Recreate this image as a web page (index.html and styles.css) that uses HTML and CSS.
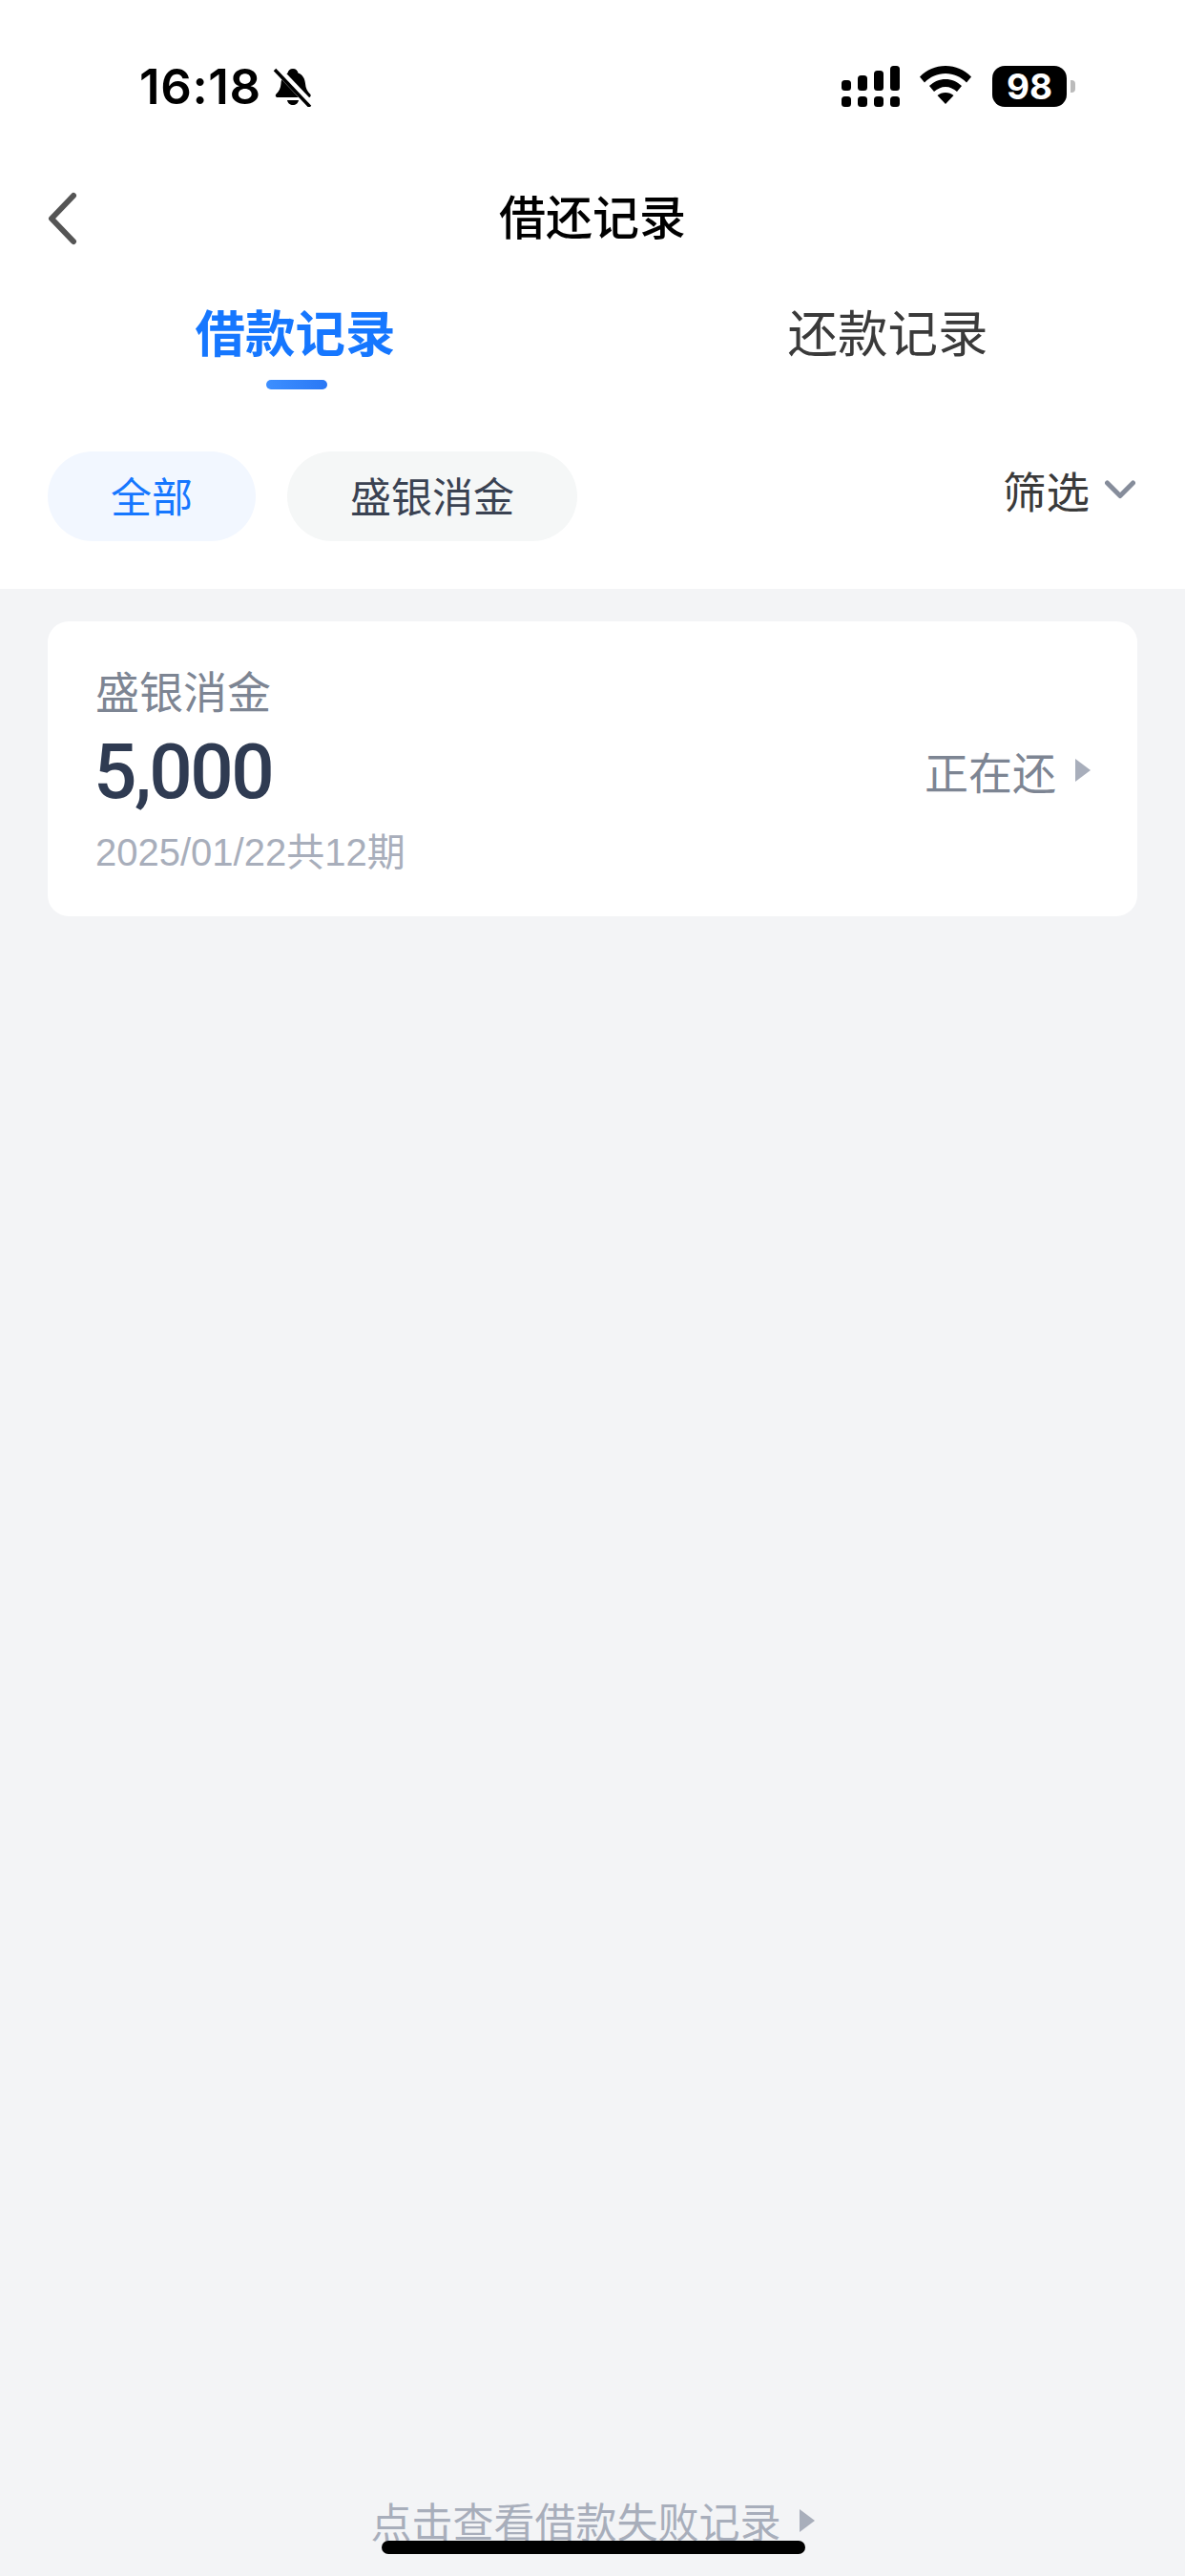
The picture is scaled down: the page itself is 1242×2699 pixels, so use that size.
FILE: index.html
```html
<!DOCTYPE html>
<html lang="zh-CN">
<head>
<meta charset="UTF-8" />
<meta name="viewport" content="width=device-width, initial-scale=1" />
<title>借还记录</title>
<link rel="stylesheet" href="styles.css">
</head>
<body>

<div class="app">
  <header class="top">
    <div class="status">
      <div class="status-left">
        <span class="time">16:18</span>
        <svg class="bell" width="42" height="42" viewBox="0 0 42 42">
          <path d="M21 2c3 0 5 2 5.500 4.500 5 2 7 6 7.500 11 .4 5 2 8 5 11 1.500 1.500 .5 3.500-1.500 3.500H5c-2 0-3-2-1.500-3.500 3-3 4.600-6 5-11 .3-4 1.500-8 7-11C16 4 18 2 21 2z"/>
          <path d="M15 35h12c-.5 3-3 5-6 5s-5.500-2-6-5z"/>
          <path d="M3 1l37 39" stroke="#fff" stroke-width="8"/>
          <path d="M2 3l37 39" stroke="#000" stroke-width="3.500"/>
        </svg>
      </div>
      <div class="status-right">
        <svg width="61" height="43" viewBox="0 0 61 43">
          <rect x="0" y="15" width="10" height="11" rx="3.500"/>
          <rect x="17" y="10" width="10" height="16" rx="3.500"/>
          <rect x="34" y="5" width="10" height="21" rx="3.500"/>
          <rect x="51" y="0" width="10" height="26" rx="3.500"/>
          <rect x="0" y="32" width="10" height="11" rx="3.500"/>
          <rect x="17" y="32" width="10" height="11" rx="3.500"/>
          <rect x="34" y="32" width="10" height="11" rx="3.500"/>
          <rect x="51" y="32" width="10" height="11" rx="3.500"/>
        </svg>
        <svg class="wifi" width="54" height="40" viewBox="0 0 54 40">
          <path d="M27 0c10.500 0 19.500 4 27 11.500l-5 6C43 11.500 35.500 8 27 8S11 11.500 5 17.500l-5-6C7.500 4 16.500 0 27 0z"/>
          <path d="M27 14c6.500 0 12 2.500 17 7l-5 6c-3.500-3-7.500-5-12-5s-8.500 2-12 5l-5-6c5-4.500 10.500-7 17-7z"/>
          <path d="M27 28c3.500 0 6 1 8.500 3L27 40l-8.500-9c2.500-2 5-3 8.500-3z"/>
        </svg>
        <div class="battery">
          <span class="battery-level">98</span>
          <span class="battery-cap"></span>
        </div>
      </div>
    </div>

    <nav class="navbar">
      <svg class="back" width="34" height="56" viewBox="0 0 34 56">
        <path d="M29 4L6 28l23 24" fill="none" stroke="#555" stroke-width="6" stroke-linecap="round" stroke-linejoin="round"/>
      </svg>
      <h1 class="title">借还记录</h1>
    </nav>

    <div class="tabs">
      <div class="tab tab-active">借款记录</div>
      <div class="tab">还款记录</div>
    </div>

    <div class="filters">
      <span class="pill pill-active">全部</span>
      <span class="pill">盛银消金</span>
      <div class="filter-btn">
        <span>筛选</span>
        <svg width="32" height="20" viewBox="0 0 32 20">
          <path d="M2.500 3L16 16.500 29.500 3" fill="none" stroke="#868d9b" stroke-width="5" stroke-linecap="round" stroke-linejoin="round"/>
        </svg>
      </div>
    </div>
  </header>

  <main class="list">
    <section class="card">
      <div class="card-info">
        <div class="card-name">盛银消金</div>
        <div class="card-amount">5,000</div>
        <div class="card-date">2025/01/22共12期</div>
      </div>
      <div class="card-status">
        <span>正在还</span>
        <i class="arrow"></i>
      </div>
    </section>
  </main>

  <footer class="fail-link">
    <span>点击查看借款失败记录</span>
    <i class="arrow"></i>
  </footer>

  <div class="home-bar"></div>
</div>

</body>
</html>
```

FILE: styles.css
```css
* { box-sizing: border-box; }
html, body { margin: 0; padding: 0; }
body { font-family: "Noto Sans CJK SC", "Liberation Sans", sans-serif; background: #f3f4f6; }

.app { position: relative; width: 1242px; height: 2699px; display: flex; flex-direction: column; overflow: hidden; }

.top { background: #fff; height: 617px; }

.status { height: 180px; padding: 69px 115px 0 146px; display: flex; justify-content: space-between; align-items: flex-start; }
.status-left { display: flex; align-items: center; gap: 12px; }
.time { font-family: Inter, sans-serif; font-size: 51px; font-weight: 600; line-height: 44px; color: #000; letter-spacing: 0.6px; }
.status-right { display: flex; align-items: center; gap: 21px; }
.wifi { margin-top: -3px; }
.battery { display: flex; align-items: center; gap: 4px; margin-left: 1px; }
.battery-level { width: 78px; height: 43px; border-radius: 13px; background: #000; color: #fff; font-family: Inter, sans-serif; font-size: 37px; font-weight: 700; line-height: 43px; text-align: center; }
.battery-cap { width: 5px; height: 13px; border-radius: 0 4px 4px 0; background: #bbb; }

.navbar { position: relative; height: 90px; display: flex; align-items: center; justify-content: center; }
.back { position: absolute; left: 48px; top: 21px; }
.title { margin: 0; font-size: 49px; font-weight: 500; line-height: 90px; color: #000; }

.tabs { height: 142px; display: flex; }
.tab { width: 620px; text-align: center; font-size: 52.5px; line-height: 76px; padding-top: 38px; color: #3a3a3a; position: relative; }
.tab + .tab { width: 624px; }
.tab-active { color: #1677ff; font-weight: 700; }
.tab-active::after { content: ""; position: absolute; left: 279px; top: 128px; width: 64px; height: 10px; border-radius: 5px; background: linear-gradient(90deg, #3d8fff, #2a78f5); }

.filters { padding: 61px 50px 0; display: flex; align-items: flex-start; gap: 33px; }
.pill { height: 94px; padding: 0 66px; border-radius: 47px; background: #f5f7f7; font-size: 43px; line-height: 90px; color: #3a4252; }
.pill-active { background: #f2f7ff; color: #1677ff; }
.filter-btn { margin-left: auto; margin-right: 2px; display: flex; align-items: center; gap: 16px; height: 80px; font-size: 45.5px; color: #3a3a3a; }

.list { flex: 1; padding: 34px 50px 0; }
.card { height: 309px; padding: 0 49px 0 50px; background: #fff; border-radius: 22px; display: flex; justify-content: space-between; align-items: center; }
.card-name { font-size: 46px; line-height: 60px; color: #7d8593; }
.card-amount { font-family: Roboto, sans-serif; font-size: 80px; font-weight: 500; line-height: 114px; color: #2f3b52; letter-spacing: -2.5px; margin-left: -2px; }
.card-date { font-size: 40px; line-height: 54px; color: #a8aebb; font-family: "Liberation Sans", "Noto Sans CJK SC", sans-serif; }
.card-status { display: flex; align-items: center; gap: 20px; font-size: 46px; color: #7d8593; margin-top: 3px; }

.arrow { display: block; width: 0; height: 0; border-style: solid; border-width: 12px 0 12px 16px; border-color: transparent transparent transparent #a8aebb; }

.fail-link { height: 100px; padding-top: 13px; display: flex; justify-content: center; align-items: flex-start; gap: 19px; font-size: 43px; line-height: 56px; color: #a8aebb; }
.fail-link .arrow { margin-top: 17px; }

.home-bar { position: absolute; left: 400px; bottom: 23px; width: 444px; height: 14px; border-radius: 7px; background: #000; }
```
